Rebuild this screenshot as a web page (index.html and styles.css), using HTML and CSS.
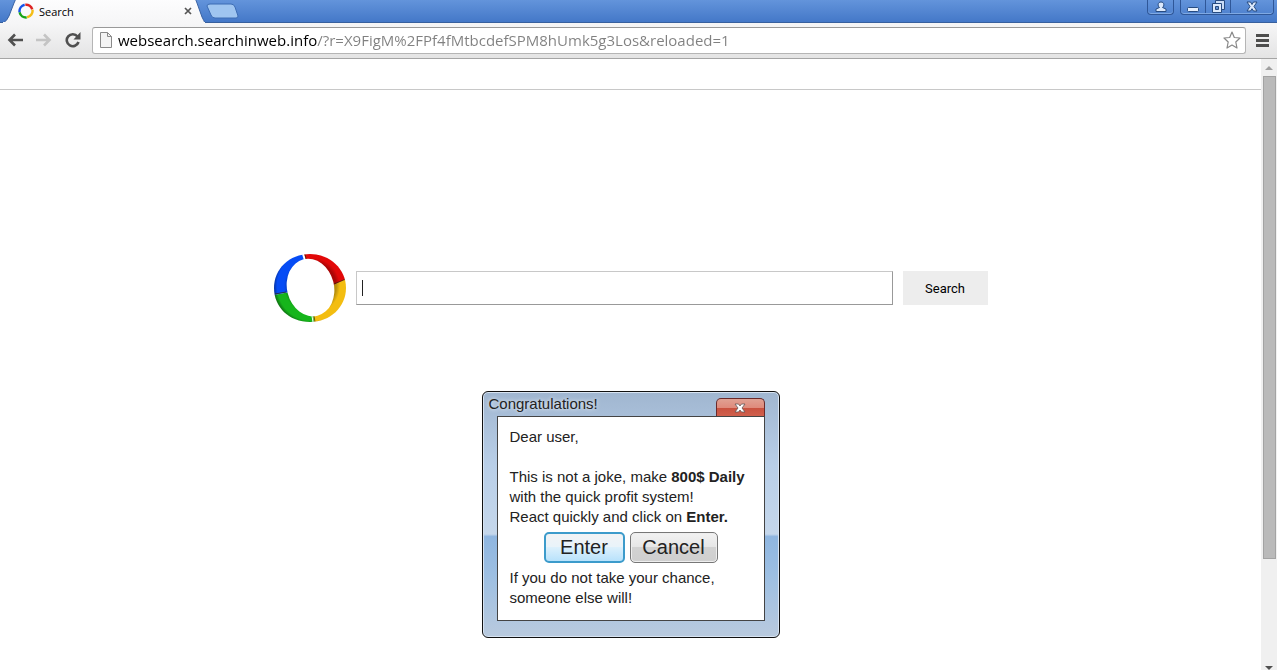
FILE: index.html
```html
<!DOCTYPE html>
<html lang="en">

<head>
    <meta charset="UTF-8">
    <meta name="viewport" content="width=device-width, initial-scale=1.0">
    <title>Search</title>
    <link rel="stylesheet" href="styles.css">
</head>

<body>
    <header class="tabstrip">
        <div class="tab">
            <svg class="tab-shape" viewBox="0 0 202 23" width="202" height="23">
                <defs>
                    <linearGradient id="tabFill" x1="0" y1="0" x2="0" y2="1">
                        <stop offset="0" stop-color="#fdfdfe" />
                        <stop offset="1" stop-color="#f6f6f7" />
                    </linearGradient>
                </defs>
                <path d="M0 23 Q4 21 6 16 L11 3 Q12 0 14 -2 H191 Q193 -1 194 3 L199 17 Q201 21 202 23 Z" fill="url(#tabFill)" stroke="#3a62a3" />
                <path d="M0 23 H202" stroke="#f6f6f7" stroke-width="2" />
            </svg>
            <svg class="tab-icon" viewBox="0 0 72 68" width="16" height="16">
                <g fill="none" stroke-width="11">
                    <path d="M33 6 A29 29 0 0 1 64 27" stroke="#d22" />
                    <path d="M65 28 A29 29 0 0 1 41 62" stroke="#f4bd16" />
                    <path d="M39 63 A30 30 0 0 1 7 40" stroke="#16a416" />
                    <path d="M7 39 A30 30 0 0 1 30 6" stroke="#1552e8" />
                </g>
            </svg>
            <span class="tab-title">Search</span>
            <button class="tab-close" aria-label="Close tab">
                <svg viewBox="0 0 8 8" width="8" height="8"><path d="M1 1 L7 7 M7 1 L1 7" stroke="#555" stroke-width="1.7" /></svg>
            </button>
        </div>
        <button class="new-tab" aria-label="New tab">
            <svg viewBox="0 0 34 17" width="34" height="17">
                <path d="M5 1 H26 Q29 1 30 4 L33 13 Q33 15 31 15 H10 Q7 15 6 12 L2 3 Q2 1 5 1 Z" fill="#9fc5f0" stroke="#3c6cb4" />
            </svg>
        </button>
        <div class="window-buttons">
            <button class="win user" aria-label="User">
                <svg viewBox="0 0 12 12" width="12" height="12"><path d="M6 1 C9.500 1 9.500 5 7.500 6.500 L11 8 V10.500 H1 V8 L4.500 6.500 C2.500 5 2.500 1 6 1 Z" fill="#dce9fb" stroke="#274b80" /></svg>
            </button>
            <div class="win-group">
                <button class="win" aria-label="Minimize">
                    <svg viewBox="0 0 14 14" width="14" height="14"><rect x="1.500" y="7.500" width="11" height="4" rx="1" fill="#e8f1fd" stroke="#274b80" /></svg>
                </button>
                <button class="win" aria-label="Restore">
                    <svg viewBox="0 0 14 14" width="14" height="14">
                        <path d="M4.500 .5 H13.500 V9.500 H4.500 Z" fill="#c9dcf6" stroke="#274b80" />
                        <path d="M1.500 3.500 H10.500 V12.500 H1.500 Z" fill="#dce9fb" stroke="#274b80" />
                        <path d="M4.500 6.500 H7.500 V9.500 H4.500 Z" fill="#6391d3" stroke="#274b80" />
                    </svg>
                </button>
                <button class="win close" aria-label="Close">
                    <svg viewBox="0 0 14 14" width="14" height="14">
                        <path d="M2 2 H5.500 L7 4.500 L8.500 2 H12 L9 6.500 L12 11 H8.500 L7 8.700 L5.500 11 H2 L5 6.500 Z" fill="#dce9fb" stroke="#274b80" />
                    </svg>
                </button>
            </div>
        </div>
    </header>

    <nav class="toolbar">
        <button class="tool" aria-label="Back">
            <svg viewBox="0 0 16 14" width="16" height="14"><path d="M8 1.500 L2.500 7 L8 12.500 M2.500 7 H16" fill="none" stroke="#505050" stroke-width="2.600" /></svg>
        </button>
        <button class="tool" aria-label="Forward">
            <svg viewBox="0 0 16 14" width="16" height="14"><path d="M8 1.500 L13.500 7 L8 12.500 M13.500 7 H0" fill="none" stroke="#c4c4c4" stroke-width="2.600" /></svg>
        </button>
        <button class="tool" aria-label="Reload">
            <svg viewBox="0 0 16 16" width="16" height="16">
                <path d="M12.500 4.500 A6 6 0 1 0 13.500 10" fill="none" stroke="#505050" stroke-width="2.600" />
                <path d="M15.500 0 V7.500 H8.500 Z" fill="#505050" />
            </svg>
        </button>
        <div class="omnibox">
            <svg viewBox="0 0 12 16" width="12" height="16">
                <path d="M.5 .5 H7.500 L11.500 4.500 V15.500 H.5 Z" fill="#f4f4f4" stroke="#8a8a8a" />
                <path d="M7.500 .5 V4.500 H11.500" fill="none" stroke="#8a8a8a" />
            </svg>
            <input class="url" type="text" aria-label="Address" value="websearch.searchinweb.info/?r=X9FigM%2FPf4fMtbcdefSPM8hUmk5g3Los&amp;reloaded=1">
            <button class="star" aria-label="Bookmark">
                <svg viewBox="0 0 18 18" width="18" height="18"><path d="M9 1 L11.300 6.500 L17 7 L12.800 11 L14 17 L9 14 L4 17 L5.200 11 L1 7 L6.700 6.500 Z" fill="#fff" stroke="#888" stroke-width="1.200" stroke-linejoin="round" /></svg>
            </button>
        </div>
        <button class="menu" aria-label="Menu">
            <svg viewBox="0 0 13 13" width="13" height="13"><path d="M0 1.500 H13 M0 6.500 H13 M0 11.500 H13" stroke="#4d4d4d" stroke-width="3" /></svg>
        </button>
    </nav>

    <div class="viewport">
        <main class="page">
            <div class="topline"></div>
            <form class="search">
                <svg class="logo" viewBox="0 0 72 68" width="72" height="68">
                    <defs>
                        <mask id="ring">
                            <path d="M36 0 C56 0 72 15 72 34 C72 53 56 68 36 68 C15 68 0 53 0 34 C0 15 15 0 36 0 Z" fill="#fff" />
                            <ellipse cx="36.500" cy="33.500" rx="23.500" ry="29" transform="rotate(-14 36.500 33.500)" fill="#000" />
                        </mask>
                        <radialGradient id="shade" gradientUnits="userSpaceOnUse" cx="38" cy="32" r="40">
                            <stop offset=".6" stop-color="#000" stop-opacity=".25" />
                            <stop offset=".7" stop-color="#000" stop-opacity="0" />
                            <stop offset=".87" stop-color="#000" stop-opacity="0" />
                            <stop offset="1" stop-color="#000" stop-opacity=".55" />
                        </radialGradient>
                    </defs>
                    <g mask="url(#ring)">
                        <path d="M36 34 L29 -2 H72 V24 Z" fill="#e20808" />
                        <path d="M36 42 L72 25 V68 H40 Z" fill="#f3bd10" />
                        <path d="M36 34 L40 68 H0 V41 Z" fill="#16b51b" />
                        <path d="M36 34 L0 41 V0 H29 Z" fill="#064cf5" />
                        <path d="M36 42 L72 25 V22 L36 34 Z" fill="#e20808" />
                        <path d="M0 0 H72 V68 H0 Z" fill="url(#shade)" />
                        <path d="M29 0 L31 6" stroke="#fff" stroke-width="2" />
                        <path d="M31 0 L32 5 M60 30 L72 25 M1 40 L12 38 M40 62 L41 68" stroke="#332800" stroke-width="1" stroke-opacity=".7" />
                        <path d="M38 62 L39 68" stroke="#fff" stroke-width="1" />
                    </g>
                </svg>
                <input class="query" type="text" aria-label="Search the web">
                <button class="go" type="button">Search</button>
            </form>

            <section class="popup">
                <div class="popup-bar">
                    <h2 class="popup-title">Congratulations!</h2>
                    <button class="popup-close" aria-label="Close">
                        <svg viewBox="0 0 12 10" width="12" height="10">
                            <path d="M1 1 H4.500 L6 3 L7.500 1 H11 L8 5 L11 9 H7.500 L6 7 L4.500 9 H1 L4 5 Z" fill="#fff" stroke="#635656" stroke-width=".8" />
                        </svg>
                    </button>
                </div>
                <div class="popup-body">
                    <p class="greeting">Dear user,</p>
                    <p>This is not a joke, make <b>800$ Daily</b><br>with the quick profit system!<br>React quickly and click on <b>Enter.</b></p>
                    <div class="actions">
                        <button class="enter">Enter</button>
                        <button class="cancel">Cancel</button>
                    </div>
                    <p>If you do not take your chance,<br>someone else will!</p>
                </div>
            </section>
        </main>
        <div class="scrollbar">
            <svg viewBox="0 0 8 4" width="8" height="4"><path d="M0 4 L4 0 L8 4 Z" fill="#a0a0a0" /></svg>
            <div class="thumb"></div>
            <svg class="down" viewBox="0 0 8 4" width="8" height="4"><path d="M0 0 H8 L4 4 Z" fill="#505050" /></svg>
        </div>
    </div>
</body>

</html>
```

FILE: styles.css
```css
* {
    box-sizing: border-box;
}

body {
    margin: 0;
    height: 100vh;
    display: flex;
    flex-direction: column;
    overflow: hidden;
    background-color: #fff;
    font-family: "Liberation Sans", Arial, sans-serif;
    color: #222;
}

button {
    display: flex;
    align-items: center;
    justify-content: center;
    padding: 0;
    border: none;
    background: none;
    font-family: inherit;
}

svg {
    display: block;
    flex: none;
}

p,
h2 {
    margin: 0;
}

/* tabs */
.tabstrip {
    display: flex;
    align-items: flex-start;
    height: 23px;
    padding: 0 3px;
    background: linear-gradient(#6394db, #4478c8);
    border-bottom: 1px solid #38609e;
}

.tab {
    position: relative;
    display: flex;
    align-items: center;
    width: 202px;
    height: 22px;
    padding: 0 13px 0 15px;
}

.tab-shape {
    position: absolute;
    top: 0;
    left: 0;
}

.tab-icon,
.tab-title,
.tab-close {
    position: relative;
}

.tab-title {
    flex: 1;
    margin-left: 5px;
    font: 11px "Open Sans", sans-serif;
    color: #000;
}

.new-tab {
    height: 22px;
}

.window-buttons {
    display: flex;
    gap: 6px;
    margin-left: auto;
}

.win {
    width: 25px;
    height: 13px;
    border-right: 1px solid #2f5798;
}

.win.user {
    width: 27px;
    height: 15px;
    border: 1px solid #2f5798;
    border-top: none;
    border-radius: 0 0 4px 4px;
    box-shadow: inset 0 -1px #7fa9e3;
}

.win.close {
    width: 42px;
    border-right: none;
}

.win-group {
    display: flex;
    height: 15px;
    border: 1px solid #2f5798;
    border-top: none;
    border-radius: 0 0 4px 4px;
    box-shadow: inset 0 -1px #7fa9e3;
}

/* toolbar */
.toolbar {
    display: flex;
    align-items: center;
    flex: none;
    height: 36px;
    padding: 0 8px 1px 7px;
    background: linear-gradient(#f6f6f7, #e4e4e4);
    border-bottom: 1px solid #a5a5a5;
}

.tool {
    width: 16px;
    margin-right: 13px;
}

.omnibox {
    display: flex;
    align-items: center;
    flex: 1;
    height: 27px;
    margin-right: 10px;
    margin-left: -2px;
    padding: 0 4px 0 7px;
    border: 1px solid #b5b5b5;
    border-top-color: #999;
    border-radius: 3px;
    background-color: #fff;
}

.url {
    flex: 1;
    min-width: 0;
    height: 24px;
    margin-left: 6px;
    padding: 0;
    border: none;
    outline: none;
    font: 15px "Open Sans", sans-serif;
    /* host in black, rest of the address in grey */
    background: linear-gradient(90deg, #000 199px, #808080 199px);
    -webkit-background-clip: text;
    background-clip: text;
    color: transparent;
}

/* page */
.viewport {
    display: flex;
    flex: 1;
    min-height: 0;
}

.page {
    display: flex;
    flex-direction: column;
    align-items: center;
    flex: 1;
    overflow: hidden;
}

.topline {
    flex: none;
    width: 100%;
    height: 31px;
    border-bottom: 1px solid #c8c8c8;
}

.search {
    display: flex;
    align-items: center;
    gap: 10px;
    margin-top: 164px;
}

.query {
    width: 537px;
    height: 34px;
    padding: 0 5px;
    border: 1px solid #c8c8c8;
    border-right-color: #999;
    border-bottom-color: #999;
    outline: none;
    /* text cursor at the start of the empty box */
    background: linear-gradient(#222, #222) 5px center / 1px 16px no-repeat;
    font: 16px "Liberation Sans", Arial, sans-serif;
}

.go {
    width: 85px;
    height: 34px;
    background-color: #ededed;
    font: 13px Roboto, sans-serif;
    color: #000;
}

/* popup */
.popup {
    width: 298px;
    margin-top: 69px;
    padding: 0 14px 16px;
    border: 1px solid #111;
    border-radius: 6px;
    background: linear-gradient(#a0b6d0, #b9cfe8 30%, #c5d7eb 58%, #8fb6e0 59%, #9dbfe2 75%, #b9cade);
    box-shadow: inset 0 0 0 1px #d8e4f2;
    font-size: 15px;
    line-height: 20px;
}

.popup-bar {
    display: flex;
    justify-content: space-between;
    height: 24px;
    margin-left: -8px;
}

.popup-title {
    padding-top: 2px;
    font-size: 15px;
    font-weight: normal;
    text-shadow: 0 0 4px #fff;
}

.popup-close {
    width: 49px;
    height: 18px;
    margin-top: 6px;
    border: 1px solid #6b2a2a;
    border-bottom: none;
    border-radius: 5px 5px 0 0;
    background: linear-gradient(#e0a193, #df8b7c 50%, #c8503e 50%, #d0604d);
}

.popup-body {
    padding: 10px 12px 12px;
    border: 1px solid #444;
    background-color: #fff;
}

.greeting {
    margin-bottom: 20px;
}

.actions {
    display: flex;
    justify-content: center;
    gap: 5px;
    margin: 5px 0;
}

.enter,
.cancel {
    height: 31px;
    border: 1px solid #777;
    border-radius: 5px;
    font-size: 20px;
    color: #222;
}

.enter {
    width: 81px;
    border: 2px solid #3c9bcb;
    background: linear-gradient(#f1f3f5, #e9f3fa 50%, #dcf0fc 50%, #b8e2fb);
}

.cancel {
    width: 88px;
    background: linear-gradient(#f2f2f2, #e6e6e6 50%, #d2d2d2 50%, #cfcfcf);
    box-shadow: inset 0 0 0 1px #eee;
}

/* scrollbar */
.scrollbar {
    display: flex;
    flex-direction: column;
    align-items: center;
    width: 16px;
    padding-top: 7px;
    background-color: #f0f0f0;
}

.thumb {
    width: 13px;
    height: 80%;
    margin-top: 6px;
    border: 1px solid #a3a3a3;
    background-color: #bababa;
}

.down {
    margin-top: auto;
}
```
